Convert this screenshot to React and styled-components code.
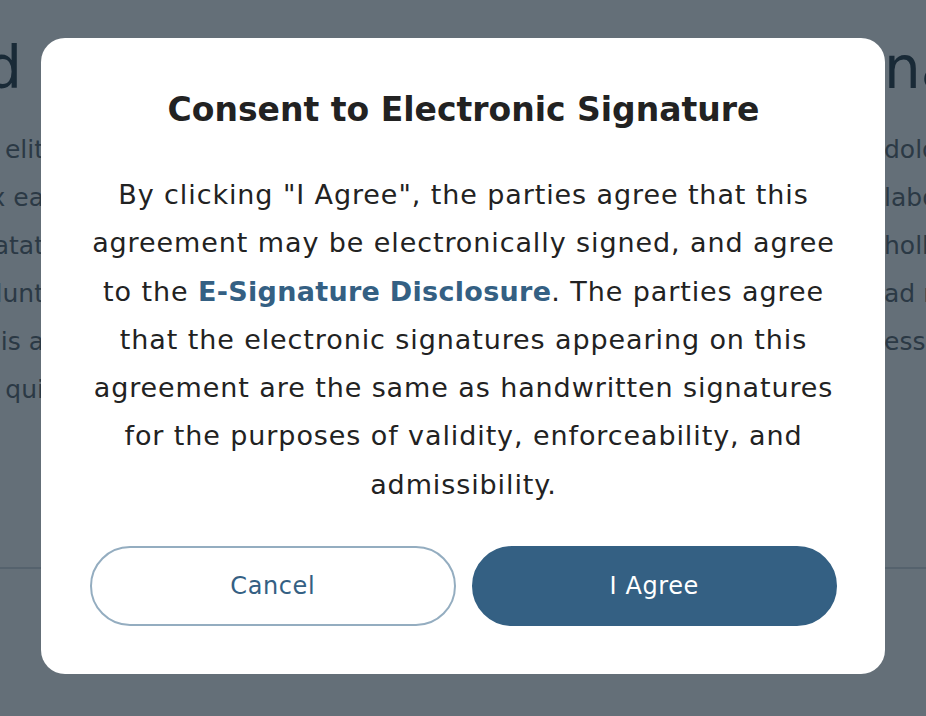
import React from "react";
import styled, { createGlobalStyle } from "styled-components";

const GlobalStyle = createGlobalStyle`
  html, body {
    margin: 0;
    padding: 0;
    width: 100%;
    height: 100%;
    overflow: hidden;
    background: #ffffff;
  }
  body {
    font-family: "DejaVu Sans", "Open Sans", sans-serif;
  }
`;

const backRows = [
  ["sed elit", "dolore"],
  ["ex ea", "labore"],
  ["cupidatat", "hollit"],
  ["incididunt", "ad minim"],
  ["quis a", "esse"],
  ["qui", ""],
];

const App = () => {
  return (
    <>
      <GlobalStyle />
      <Page>
        <PageTitle>
          <LeftCut $w={22}>Field and</LeftCut>
          <RightCut $w={42}>nal</RightCut>
        </PageTitle>
        {backRows.map(([left, right]) => (
          <PageRow key={left}>
            <LeftCut $w={44}>{left}</LeftCut>
            <RightCut $w={42}>{right}</RightCut>
          </PageRow>
        ))}
        <Rule />
      </Page>

      <Overlay>
        <Dialog role="dialog" aria-labelledby="consent-title">
          <Title id="consent-title">Consent to Electronic Signature</Title>
          <Body>
            By clicking "I Agree", the parties agree that this agreement may be
            electronically signed, and agree to the{" "}
            <DisclosureLink href="#">E-Signature Disclosure</DisclosureLink>. The
            parties agree that the electronic signatures appearing on this
            agreement are the same as handwritten signatures for the purposes of
            validity, enforceability, and admissibility.
          </Body>
          <Actions>
            <ActionButton type="button">Cancel</ActionButton>
            <ActionButton type="button" $primary>
              I Agree
            </ActionButton>
          </Actions>
        </Dialog>
      </Overlay>
    </>
  );
};

const Page = styled.div`
  width: 926px;
  height: 716px;
  box-sizing: border-box;
  padding-top: 34px;
  display: flex;
  flex-direction: column;
  overflow: hidden;
  color: #5d666d;
`;

const PageTitle = styled.h1`
  margin: 0 0 24px;
  display: flex;
  justify-content: space-between;
  font-size: 58px;
  line-height: 68px;
  font-weight: 500;
  color: #2a3a47;
`;

const PageRow = styled.div`
  display: flex;
  justify-content: space-between;
  font-size: 25px;
  line-height: 48px;
`;

const LeftCut = styled.span`
  width: ${(p) => p.$w}px;
  display: flex;
  justify-content: flex-end;
  overflow: hidden;
  white-space: nowrap;
`;

const RightCut = styled.span`
  width: ${(p) => p.$w}px;
  overflow: hidden;
  white-space: nowrap;
`;

const Rule = styled.div`
  width: 100%;
  height: 2px;
  margin-top: 153px;
  flex-shrink: 0;
  background: #d4dadf;
`;

const Overlay = styled.div`
  position: fixed;
  inset: 0;
  display: flex;
  align-items: center;
  justify-content: center;
  background: rgba(17, 34, 47, 0.65);
`;

const Dialog = styled.div`
  width: 844px;
  height: 636px;
  box-sizing: border-box;
  margin-bottom: 4px;
  padding: 44px 48px 0 49px;
  background: #ffffff;
  border-radius: 24px;
  display: flex;
  flex-direction: column;
  align-items: center;
`;

const Title = styled.h2`
  margin: 0;
  font-size: 33px;
  line-height: 56px;
  font-weight: 700;
  color: #222222;
  text-align: center;
`;

const Body = styled.p`
  margin: 33px 0 0;
  font-size: 27px;
  letter-spacing: 0.9px;
  line-height: 48.3px;
  color: #222222;
  text-align: center;
`;

const DisclosureLink = styled.a`
  color: #346083;
  font-weight: 700;
  letter-spacing: 0.3px;
  text-decoration: none;
`;

const Actions = styled.div`
  width: 100%;
  margin-top: 37px;
  display: grid;
  grid-template-columns: 1fr 1fr;
  gap: 16px;
`;

const ActionButton = styled.button`
  height: 80px;
  border-radius: 40px;
  font-family: inherit;
  font-size: 24px;
  letter-spacing: 0.6px;
  font-weight: 500;
  cursor: pointer;
  border: 2px solid ${(p) => (p.$primary ? "#346083" : "#94adc0")};
  background: ${(p) => (p.$primary ? "#346083" : "#ffffff")};
  color: ${(p) => (p.$primary ? "#ffffff" : "#346083")};
`;

export default App;
